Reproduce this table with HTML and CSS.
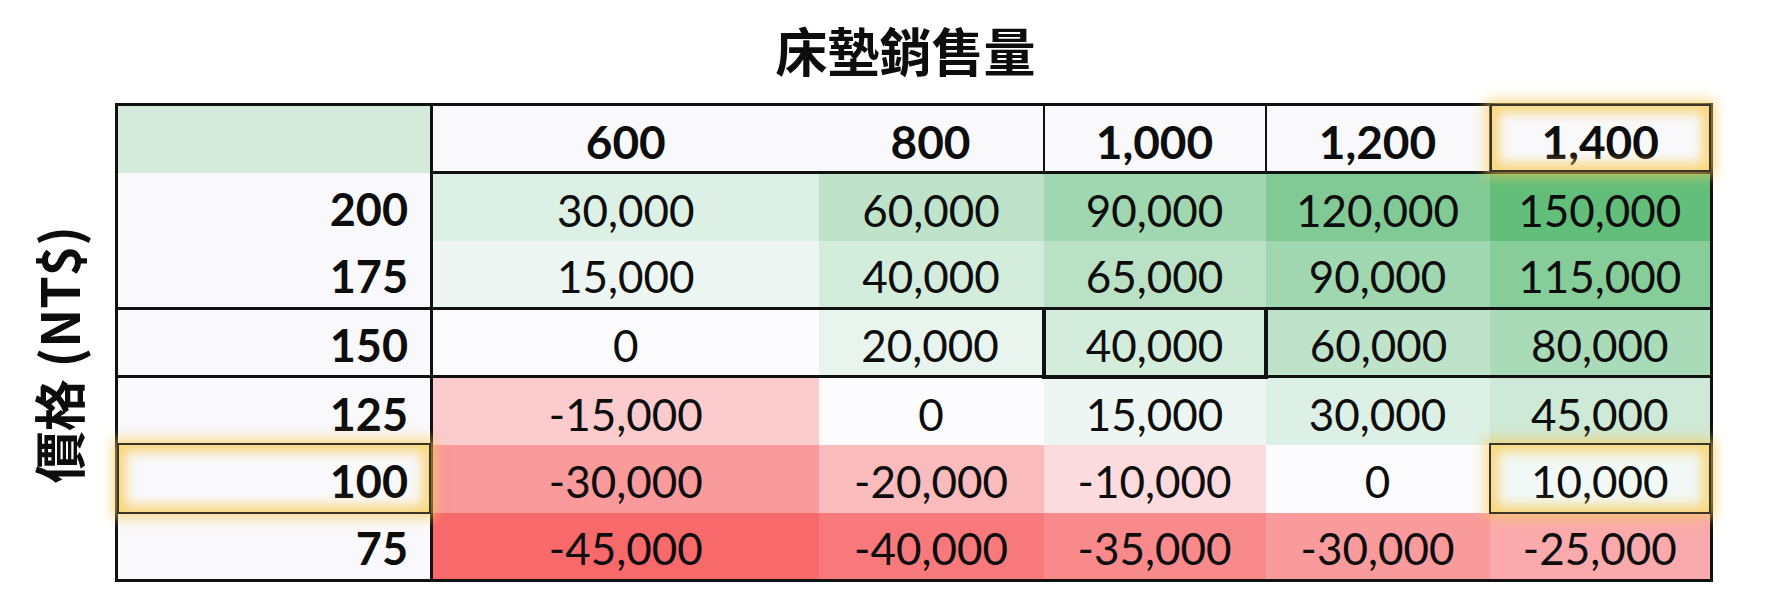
FILE: index.html
```html
<!DOCTYPE html>
<html lang="zh-Hant">
<head>
<meta charset="utf-8">
<title>床墊銷售量</title>
<link rel="stylesheet" href="styles.css">
</head>
<body>
<div class="page">
  <h1 class="title">床墊銷售量</h1>
  <div class="main">
    <div class="ylabel-col"><div class="ylabel">價格 (NT$)</div></div>
    <table class="grid">
      <colgroup>
        <col class="c-rh"><col class="c-600"><col class="c-800"><col class="c-1000"><col class="c-1200"><col class="c-1400">
      </colgroup>
      <thead>
        <tr>
          <th class="corner"></th>
          <th class="hd">600</th>
          <th class="hd">800</th>
          <th class="hd sep">1,000</th>
          <th class="hd sep">1,200</th>
          <th class="hd sep hi"><span class="glow"></span>1,400</th>
        </tr>
      </thead>
      <tbody>
        <tr>
          <td class="rh">200</td>
          <td style="background:rgb(221,240,229)">30,000</td>
          <td style="background:rgb(191,227,202)">60,000</td>
          <td style="background:rgb(160,215,176)">90,000</td>
          <td style="background:rgb(130,202,149)">120,000</td>
          <td style="background:rgb(99,190,123)">150,000</td>
        </tr>
        <tr>
          <td class="rh">175</td>
          <td style="background:rgb(237,246,242)">15,000</td>
          <td style="background:rgb(211,236,220)">40,000</td>
          <td style="background:rgb(186,225,198)">65,000</td>
          <td style="background:rgb(160,215,176)">90,000</td>
          <td style="background:rgb(135,205,154)">115,000</td>
        </tr>
        <tr class="thick">
          <td class="rh">150</td>
          <td style="background:rgb(252,252,255)">0</td>
          <td style="background:rgb(232,244,237)">20,000</td>
          <td class="boxed" style="background:rgb(211,236,220)">40,000</td>
          <td style="background:rgb(191,227,202)">60,000</td>
          <td style="background:rgb(170,219,185)">80,000</td>
        </tr>
        <tr class="thick">
          <td class="rh">125</td>
          <td style="background:rgb(251,203,206)">-15,000</td>
          <td style="background:rgb(252,252,255)">0</td>
          <td style="background:rgb(237,246,242)">15,000</td>
          <td style="background:rgb(221,240,229)">30,000</td>
          <td style="background:rgb(206,233,215)">45,000</td>
        </tr>
        <tr>
          <td class="rh hi"><span class="glow"></span>100</td>
          <td style="background:rgb(249,154,156)">-30,000</td>
          <td style="background:rgb(250,187,189)">-20,000</td>
          <td style="background:rgb(251,219,222)">-10,000</td>
          <td style="background:rgb(252,252,255)">0</td>
          <td class="hi" style="background:rgb(242,248,246)"><span class="glow"></span>10,000</td>
        </tr>
        <tr>
          <td class="rh">75</td>
          <td style="background:rgb(248,105,107)">-45,000</td>
          <td style="background:rgb(248,121,123)">-40,000</td>
          <td style="background:rgb(249,138,140)">-35,000</td>
          <td style="background:rgb(249,154,156)">-30,000</td>
          <td style="background:rgb(250,170,173)">-25,000</td>
        </tr>
      </tbody>
    </table>
  </div>
</div>
</body>
</html>
```

FILE: styles.css
```css
* { box-sizing: border-box; }

body {
  margin: 0;
  background: #ffffff;
  color: #0d0d0d;
  font-family: Lato, "Noto Sans CJK TC", sans-serif;
}

.page {
  padding-top: 19px;
}

.title {
  margin: 0 0 22px 108px;
  width: 1595px;
  text-align: center;
  font-family: "Noto Sans CJK TC", sans-serif;
  font-weight: 700;
  font-size: 52px;
  line-height: 62px;
}

.main {
  display: flex;
  align-items: stretch;
}

.ylabel-col {
  width: 115px;
  flex: none;
  display: flex;
  align-items: center;
  justify-content: center;
  padding-top: 24px;
}

.ylabel {
  writing-mode: vertical-rl;
  text-orientation: sideways;
  transform: rotate(180deg);
  font-family: "Noto Sans CJK TC", sans-serif;
  font-weight: 700;
  font-size: 52px;
  line-height: 1;
  white-space: nowrap;
}

.grid {
  border-collapse: collapse;
  table-layout: fixed;
  width: 1595px;
  border: 3px solid #111;
}

.c-rh { width: 315px; }
.c-600 { width: 387px; }
.c-800 { width: 225px; }
.c-1000 { width: 222px; }
.c-1200 { width: 224px; }
.c-1400 { width: 222px; }

.grid th,
.grid td {
  height: 68px;
  padding: 5px 0 0 0;
  text-align: center;
  font-size: 44px;
  font-weight: 400;
}

.grid th {
  font-weight: 700;
  font-size: 46px;
  background: #f9f9fb;
  border-bottom: 3px solid #111;
}

.grid th.corner {
  background: #d4ebdb;
  border-bottom: none;
  border-right: 3px solid #111;
}

.grid th.sep {
  border-left: 2px solid #111;
}

.grid td.rh {
  text-align: right;
  padding-right: 22px;
  font-weight: 700;
  font-size: 45px;
  background: #f9f8fb;
  border-right: 3px solid #111;
}

.grid tr.thick td {
  border-top: 3px solid #111;
}

.grid td.boxed {
  border: 4px solid #111;
}

.hi {
  position: relative;
}

.glow {
  position: absolute;
  top: -2px;
  left: -1px;
  right: -1px;
  bottom: -1px;
  border: 2px solid #3a3526;
  box-shadow: 0 0 12px 4px rgba(248, 204, 90, 0.7),
              inset 0 0 12px 7px rgba(248, 208, 105, 0.85);
  pointer-events: none;
  z-index: 2;
}
```
